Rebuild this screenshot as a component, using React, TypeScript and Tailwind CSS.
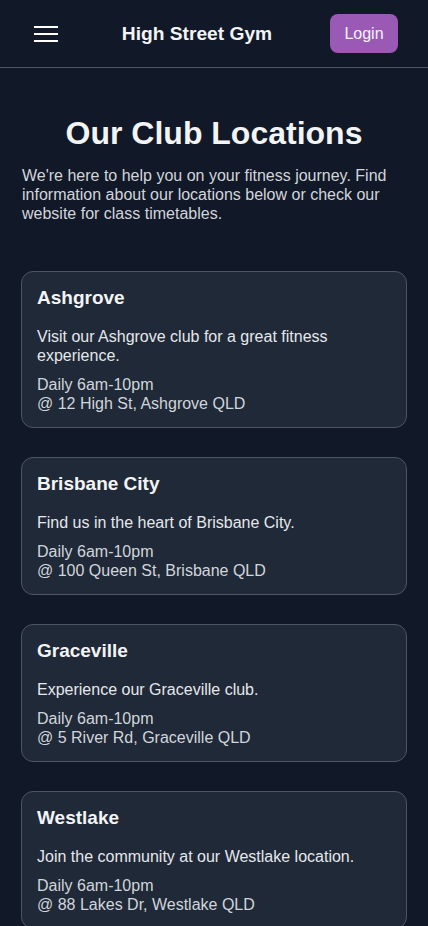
const locations = [
  {
    name: 'Ashgrove',
    blurb: 'Visit our Ashgrove club for a great fitness experience.',
    hours: 'Daily 6am-10pm',
    address: '@ 12 High St, Ashgrove QLD',
  },
  {
    name: 'Brisbane City',
    blurb: 'Find us in the heart of Brisbane City.',
    hours: 'Daily 6am-10pm',
    address: '@ 100 Queen St, Brisbane QLD',
  },
  {
    name: 'Graceville',
    blurb: 'Experience our Graceville club.',
    hours: 'Daily 6am-10pm',
    address: '@ 5 River Rd, Graceville QLD',
  },
  {
    name: 'Westlake',
    blurb: 'Join the community at our Westlake location.',
    hours: 'Daily 6am-10pm',
    address: '@ 88 Lakes Dr, Westlake QLD',
  },
];

function Header() {
  return (
    <header className="h-[68px] flex items-center justify-between pl-[34px] pr-[30px] border-b border-[#4b5563]">
      {/* Hamburger */}
      <button className="flex flex-col gap-[5px] w-6" aria-label="Menu">
        <span className="block h-[2px] w-6 bg-white" />
        <span className="block h-[2px] w-6 bg-white" />
        <span className="block h-[2px] w-6 bg-white" />
      </button>

      <h1 className="text-[19.2px] leading-[22px] font-bold text-[#f3f4f6] ml-[6px]">High Street Gym</h1>

      <button className="h-[39px] w-[68px] rounded-lg bg-[#9b59b6] text-[#f3f4f6] text-base">
        Login
      </button>
    </header>
  );
}

function LocationCard({ loc }: { loc: (typeof locations)[number] }) {
  return (
    <div className="border border-[#4b5563] bg-[#1f2937] rounded-xl px-[15px] pt-[15px] pb-[14px]">
      <h3 className="text-[19px] leading-[22px] font-bold text-[#f3f4f6] mb-[18px]">{loc.name}</h3>
      <p className="text-base leading-[19px] text-[#e5e7eb]">{loc.blurb}</p>
      <div className="mt-[10px] text-base leading-[19px] text-[#d1d5db]">
        <p>{loc.hours}</p>
        <p>{loc.address}</p>
      </div>
    </div>
  );
}

export default function App() {
  return (
    <div
      className="min-h-[926px] bg-[#111827] text-white"
      style={{ fontFamily: '"Liberation Sans", Arial, sans-serif' }}
    >
      <Header />

      <main className="px-[21px] pt-[47px] pb-10">
        <h2 className="text-[32px] leading-[37px] font-bold text-center text-[#f3f4f6]">Our Club Locations</h2>
        <p className="mt-[14px] text-base leading-[19px] text-[#d1d5db] px-[1px]">
          We're here to help you on your fitness journey. Find information about our locations below or check our
          website for class timetables.
        </p>

        <div className="mt-[48px] flex flex-col gap-[29px]">
          {locations.map((loc) => (
            <LocationCard key={loc.name} loc={loc} />
          ))}
        </div>
      </main>
    </div>
  );
}
